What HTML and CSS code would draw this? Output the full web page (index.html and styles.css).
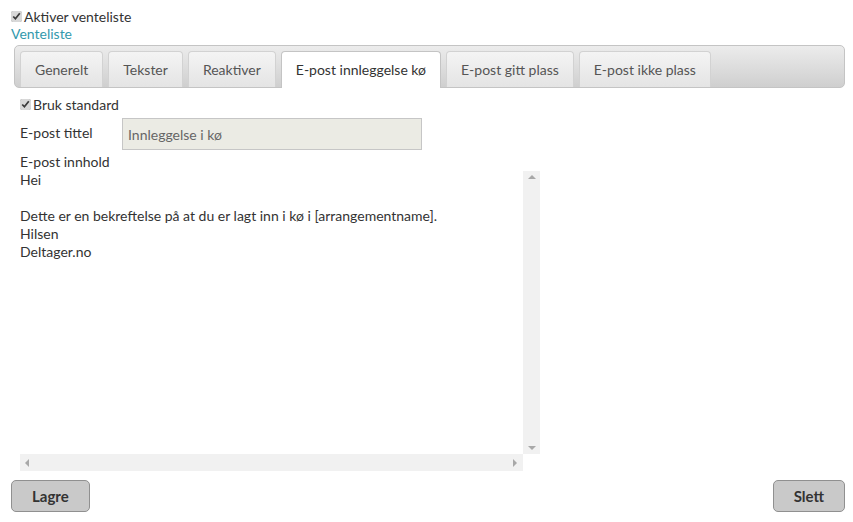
FILE: index.html
```html
<!DOCTYPE html>
<html lang="no">
<head>
    <meta charset="UTF-8">
    <title>Venteliste</title>
    <link rel="stylesheet" href="styles.css">
</head>
<body>
    <div class="page">
        <label class="check"><input type="checkbox" checked>Aktiver venteliste</label>
        <a class="link" href="#">Venteliste</a>

        <div class="tabs">
            <ul class="tab-list">
                <li class="tab">Generelt</li>
                <li class="tab">Tekster</li>
                <li class="tab">Reaktiver</li>
                <li class="tab active">E-post innleggelse kø</li>
                <li class="tab">E-post gitt plass</li>
                <li class="tab">E-post ikke plass</li>
            </ul>

            <div class="tab-panel">
                <label class="check"><input type="checkbox" checked>Bruk standard</label>

                <div class="field">
                    <label for="title">E-post tittel</label>
                    <input type="text" id="title" value="Innleggelse i kø" disabled>
                </div>

                <div class="label-line">E-post innhold</div>
                <div class="editor">
                    <textarea class="editor-text" id="content">Hei

Dette er en bekreftelse på at du er lagt inn i kø i [arrangementname].
Hilsen
Deltager.no</textarea>
                    <div class="vbar"><span class="arrow up"></span><span class="arrow down"></span></div>
                    <div class="hbar"><span class="arrow left"></span><span class="arrow right"></span></div>
                    <div class="corner"></div>
                </div>
            </div>
        </div>

        <div class="actions">
            <button type="button" class="btn">Lagre</button>
            <button type="button" class="btn">Slett</button>
        </div>
    </div>
</body>
</html>
```

FILE: styles.css
```css
body {
    margin: 0;
    font-family: Lato, "Open Sans", sans-serif;
    font-size: 14px;
    color: #333;
    background-color: #fff;
}

.page {
    padding: 7px 8px 0 11px;
}

.check {
    display: flex;
    align-items: center;
    height: 18px;
}

.check input {
    width: 11px;
    height: 11px;
    margin: 0 2px 0 0;
    accent-color: #d8d8d8;
}

.link {
    display: block;
    color: #3399ad;
    text-decoration: none;
    line-height: 18px;
}

.tabs {
    margin: 2px 0 0 3px;
}

.tab-list {
    display: flex;
    gap: 5px;
    margin: 0;
    padding: 5px 0 0 5px;
    list-style: none;
    height: 36px;
    border: 1px solid #c4c4c4;
    border-radius: 5px;
    background: linear-gradient(#ececec, #cfcfcf);
}

.tab {
    padding: 0 14px;
    line-height: 36px;
    height: 36px;
    color: #555;
    background: linear-gradient(#f4f4f4, #e4e4e4);
    border: 1px solid #d2d2d2;
    border-bottom: none;
    border-radius: 4px 4px 0 0;
    box-sizing: border-box;
}

.tab.active {
    background: #fff;
    color: #333;
    height: 37px;
    border-color: #c4c4c4;
}

.tab-panel {
    padding: 7px 0 0 6px;
}

.field {
    display: flex;
    align-items: center;
    margin-top: 5px;
}

.field label {
    width: 102px;
    padding-bottom: 3px;
}

.field input {
    width: 300px;
    height: 32px;
    box-sizing: border-box;
    padding: 0 5px;
    border: 1px solid #c6c6c6;
    background-color: #ebebe4;
    color: #666;
    font-family: inherit;
    font-size: 14px;
}

.label-line {
    margin-top: 3px;
    line-height: 18px;
}

.editor {
    display: grid;
    grid-template-columns: 503px 17px;
    grid-template-rows: 283px 17px;
}

.editor-text {
    border: none;
    padding: 0;
    margin: 0;
    resize: none;
    overflow: hidden;
    font-family: inherit;
    font-size: 14px;
    line-height: 18px;
    color: #333;
}

.vbar,
.hbar {
    position: relative;
    background-color: #f1f1f1;
}

.arrow {
    position: absolute;
    width: 0;
    height: 0;
    border: 4px solid transparent;
}

.up {
    top: 4px;
    left: 5px;
    border-bottom-color: #a8a8a8;
    border-top: none;
}

.down {
    bottom: 4px;
    left: 5px;
    border-top-color: #a8a8a8;
    border-bottom: none;
}

.left {
    left: 5px;
    top: 5px;
    border-right-color: #a8a8a8;
    border-left: none;
}

.right {
    right: 6px;
    top: 5px;
    border-left-color: #a8a8a8;
    border-right: none;
}

.actions {
    display: flex;
    justify-content: space-between;
    margin-top: 9px;
}

.btn {
    height: 32px;
    padding: 0 20px;
    background-color: #c9c9c9;
    border: 1px solid #909090;
    border-radius: 5px;
    color: #333;
    font-family: inherit;
    font-size: 15px;
    font-weight: bold;
}
```
